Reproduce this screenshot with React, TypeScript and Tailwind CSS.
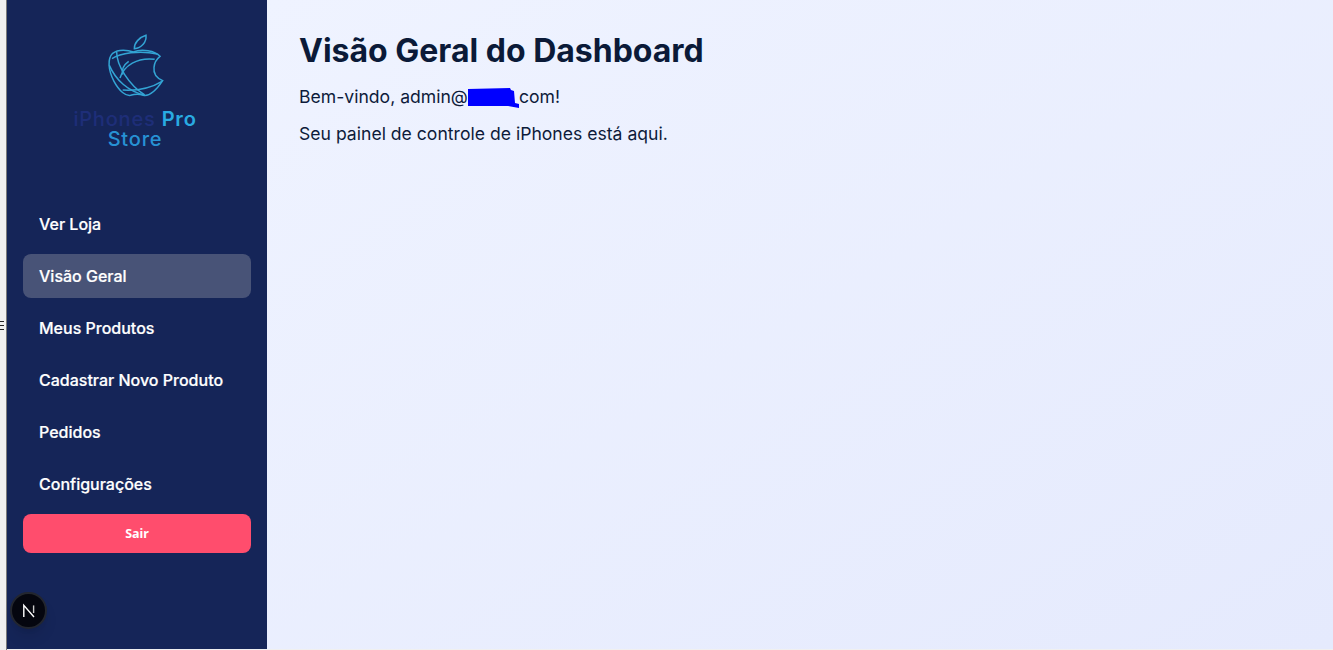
const navItems = ["Ver Loja", "Visão Geral", "Meus Produtos", "Cadastrar Novo Produto", "Pedidos", "Configurações"];

const AppleLogo = () => (
  <svg width="70" height="74" viewBox="0 0 210 222" fill="none" stroke="#33a4d4" strokeWidth="4.5">
    {/* leaf */}
    <path d="M103 62 C102 45 118 28 138 22 C140 42 125 60 103 62 Z" />
    {/* outer body */}
    <path d="M100 72 C85 66 55 62 38 76 C22 92 24 125 42 160 C58 190 78 205 92 202 C105 198 118 198 130 202 C150 206 170 185 188 158 C170 150 160 135 162 118 C163 103 170 93 180 85 C165 68 125 62 100 72 Z" />
    {/* wire bands */}
    <path d="M36 92 C60 76 118 66 172 78" />
    <path d="M60 150 C72 112 112 88 164 94" />
    <path d="M50 72 C50 112 86 170 134 201" />
    <path d="M28 112 C48 158 86 190 132 201" />
    <path d="M68 186 C102 188 150 182 186 160" />
    <path d="M86 100 C72 110 64 124 68 140" />
  </svg>
);

const App = () => {
  return (
    <div className="flex h-[650px] w-[1333px] overflow-hidden bg-[#f0f0f0] font-['Inter',sans-serif]">
      {/* window edge */}
      <div className="relative w-[7px] shrink-0 border-r border-[#7a7a7a]">
        <span className="absolute left-0 top-[321px] h-[1px] w-[4px] bg-[#222]" />
        <span className="absolute left-0 top-[325px] h-[1px] w-[4px] bg-[#222]" />
        <span className="absolute left-0 top-[329px] h-[1px] w-[4px] bg-[#222]" />
      </div>

      <div className="flex h-[649px] flex-1">
        {/* Sidebar */}
        <aside className="relative flex w-[260px] shrink-0 flex-col bg-[#152558] px-4">
          <div className="flex h-[198px] flex-col items-center pr-[4px] pt-[28px]">
            <AppleLogo />
            <div className="mt-[7px] text-center text-[20px] font-medium leading-[20px] tracking-[0.8px]">
              <span className="text-[#1e2e78]">iPhones </span>
              <span className="font-semibold text-[#29abe2]">Pro</span>
              <div className="text-[#2792d4]">Store</div>
            </div>
          </div>

          <nav className="flex flex-col gap-2 pt-[4px]">
            {navItems.map((item) => (
              <div
                key={item}
                className={`flex h-[44px] items-center rounded-lg px-4 text-base font-medium text-white [-webkit-text-stroke:0.2px_white] ${
                  item === "Visão Geral" ? "bg-[#485377]" : ""
                }`}
              >
                {item}
              </div>
            ))}
          </nav>

          <button
            type="button"
            className="mt-2 h-[39px] w-full rounded-lg bg-[#ff4d6d] pt-[1px] font-['Noto_Sans',sans-serif] text-[12.5px] font-bold text-white"
          >
            Sair
          </button>

          {/* Next badge */}
          <div className="absolute left-[3px] top-[592px] flex h-[37px] w-[37px] items-center justify-center rounded-full border-2 border-[#23262f] bg-[#05060f] shadow-lg">
            <svg width="16" height="16" viewBox="0 0 16 16" fill="none">
              <path d="M2.8 14V2.4L13 14" stroke="#fff" strokeWidth="1.4" />
              <path d="M12.6 2.4V10" stroke="#ccc" strokeWidth="1.4" />
            </svg>
          </div>
        </aside>

        {/* Main */}
        <main className="flex-1 bg-gradient-to-br from-[#eff3ff] to-[#e5eafd] px-8 py-8 text-[#0d1b3a]">
          <h1 className="mb-[14px] text-[32px] font-bold leading-[38px] text-[#0b1a38]">Visão Geral do Dashboard</h1>
          <p className="mb-[11px] text-[17.6px] leading-[26px]">
            Bem-vindo, admin@
            <svg width="51" height="20" viewBox="0 0 51 20" className="inline-block align-[-5px]">
              <polygon points="0,1 42,0 43,2 46,3 47,15 51,16 51,20 40,18 0,18" fill="#0000ff" />
            </svg>
            com!
          </p>
          <p className="text-[17.6px] leading-[26px]">Seu painel de controle de iPhones está aqui.</p>
        </main>
      </div>
    </div>
  );
};

export default App;
